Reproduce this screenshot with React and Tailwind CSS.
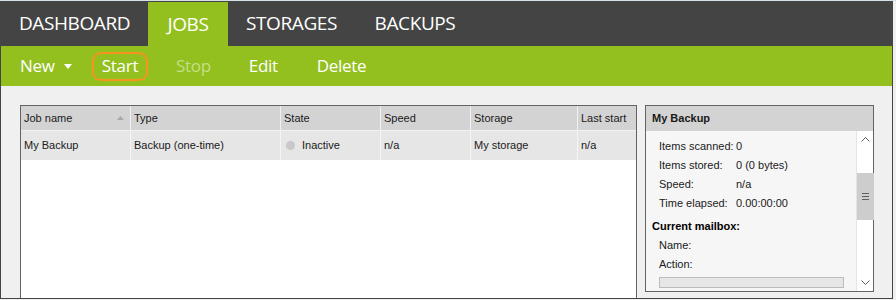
import React from "react"

const columns = [
  { name: "Job name", w: "w-[110px]", sort: true },
  { name: "Type", w: "w-[150px]" },
  { name: "State", w: "w-[100px]" },
  { name: "Speed", w: "w-[90px]" },
  { name: "Storage", w: "w-[107px]" },
  { name: "Last start", w: "flex-1" },
]

function Stat({ label, value }) {
  return (
    <div className="flex h-[19px] items-center pl-[13px]">
      <span className="w-[77px] whitespace-nowrap">{label}</span>
      <span>{value}</span>
    </div>
  )
}

export default function App() {
  return (
    <div className="w-[896px] h-[300px] overflow-hidden bg-[#f0f0f0] font-['Liberation_Sans',sans-serif] text-[11px] text-[#1a1a1a]">
      <div className="h-px bg-[#d6e2ea]" />
      <div className="w-[893px] h-[298px] border-l border-r border-b border-[#444444] flex flex-col">
        {/* tabs */}
        <div className="h-[45px] bg-[#444444] flex text-white text-[19px] font-['Open_Sans',sans-serif] tracking-[-0.4px]">
          <div className="w-[147px] flex items-center justify-center">DASHBOARD</div>
          <div className="w-[80px] mt-px bg-[#93c01f] flex items-center justify-center">JOBS</div>
          <div className="w-[127px] flex items-center justify-center">STORAGES</div>
          <div className="w-[120px] flex items-center justify-center">BACKUPS</div>
        </div>

        {/* toolbar */}
        <div className="h-[40px] bg-[#93c01f] flex items-center text-white text-[17px] font-['Open_Sans',sans-serif] tracking-[-0.3px]">
          <div className="ml-[19px] w-[72px] flex items-center">
            New
            <svg width="8" height="5" viewBox="0 0 8 5" className="ml-[9px] mt-px">
              <path d="M0 0h8L4 5z" fill="white" />
            </svg>
          </div>
          <div className="w-[56px] h-[29px] border-2 border-[#f7941d] rounded-[9px] flex items-center justify-center">
            Start
          </div>
          <div className="ml-[28px] text-[#c4de86]">Stop</div>
          <div className="ml-[38px]">Edit</div>
          <div className="ml-[39px]">Delete</div>
        </div>

        {/* content */}
        <div className="flex-1 flex pt-[19px] pl-[19px] pr-[18px] gap-[8px]">
          {/* job table */}
          <div className="w-[617px] border-l border-t border-r border-[#646464] bg-white flex flex-col">
            <div className="h-[25px] flex bg-[#d3d3d3] border-b border-[#eef2f6]">
              {columns.map((c, i) => (
                <div
                  key={c.name}
                  className={`${c.w} flex items-center pl-[3px] pr-[6px] ${i < columns.length - 1 ? "border-r border-[#eef2f6]" : ""}`}
                >
                  <span className="flex-1">{c.name}</span>
                  {c.sort && (
                    <svg width="7" height="4" viewBox="0 0 7 4">
                      <path d="M0 4h7L3.5 0z" fill="#a8a8a8" />
                    </svg>
                  )}
                </div>
              ))}
            </div>
            <div className="h-[29px] flex bg-[#e6e6e6]">
              <div className="w-[110px] flex items-center pl-[3px] border-r border-[#f4f4f4]">My Backup</div>
              <div className="w-[150px] flex items-center pl-[3px] border-r border-[#f4f4f4]">Backup (one-time)</div>
              <div className="w-[100px] flex items-center pl-[5px] border-r border-[#f4f4f4]">
                <span className="w-[9px] h-[9px] rounded-full bg-[#c8c8c8] mr-[7px]" />
                Inactive
              </div>
              <div className="w-[90px] flex items-center pl-[3px] border-r border-[#f4f4f4]">n/a</div>
              <div className="w-[107px] flex items-center pl-[3px] border-r border-[#f4f4f4]">My storage</div>
              <div className="flex-1 flex items-center pl-[3px]">n/a</div>
            </div>
          </div>

          {/* detail panel */}
          <div className="w-[229px] h-[187px] border border-[#646464] flex flex-col">
            <div className="h-[25px] bg-[#d3d3d3] flex items-center pl-[6px] font-bold">My Backup</div>
            <div className="flex-1 flex bg-[#f6f6f6]">
              <div className="flex-1 pt-[6px]">
                <Stat label="Items scanned:" value="0" />
                <Stat label="Items stored:" value="0 (0 bytes)" />
                <Stat label="Speed:" value="n/a" />
                <Stat label="Time elapsed:" value="0.00:00:00" />
                <div className="h-[19px] mt-[4px] flex items-center pl-[6px] font-bold text-black">Current mailbox:</div>
                <div className="h-[19px] flex items-center pl-[13px]">Name:</div>
                <div className="h-[19px] flex items-center pl-[13px]">Action:</div>
                <div className="ml-[13px] mt-[3px] w-[185px] h-[11px] bg-[#e6e6e6] border border-[#bcbcbc]" />
              </div>
              <div className="w-[17px] bg-white border-l border-[#e4e4e4] flex flex-col items-center">
                <div className="h-[17px] flex items-center justify-center">
                  <svg width="9" height="5" viewBox="0 0 9 5">
                    <path d="M0.5 4.5l4-4 4 4" fill="none" stroke="#606060" />
                  </svg>
                </div>
                <div className="mt-[25px] w-[17px] h-[47px] bg-[#cdcdcd] flex flex-col items-center justify-center gap-[2px]">
                  <div className="w-[7px] h-px bg-[#606060]" />
                  <div className="w-[7px] h-px bg-[#606060]" />
                  <div className="w-[7px] h-px bg-[#606060]" />
                </div>
                <div className="flex-1" />
                <div className="h-[17px] flex items-center justify-center">
                  <svg width="9" height="5" viewBox="0 0 9 5">
                    <path d="M0.5 0.5l4 4 4-4" fill="none" stroke="#606060" />
                  </svg>
                </div>
              </div>
            </div>
          </div>
        </div>
      </div>
    </div>
  )
}
